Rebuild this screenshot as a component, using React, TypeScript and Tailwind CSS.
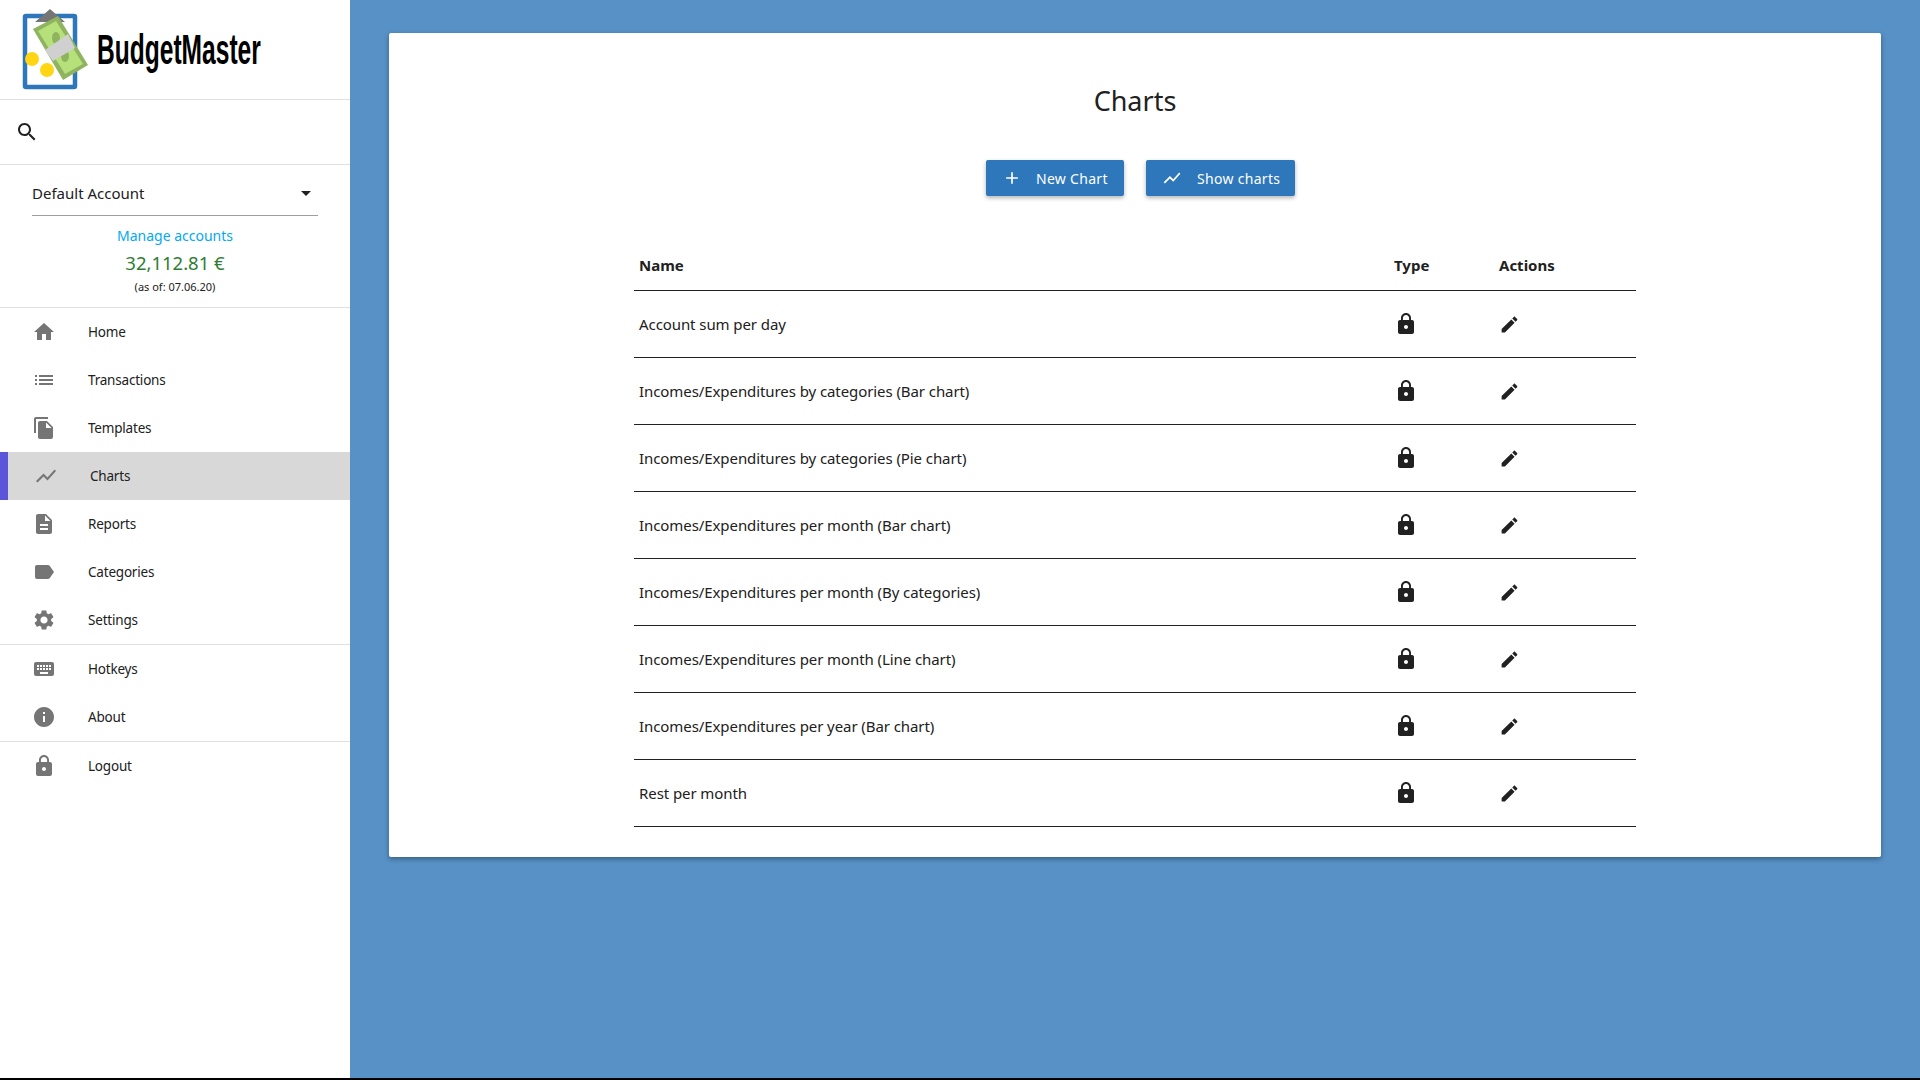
const paths = {
  home: "M10 20v-6h4v6h5v-8h3L12 3 2 12h3v8z",
  list: "M3 13h2v-2H3v2zm0 4h2v-2H3v2zm0-8h2V7H3v2zm4 4h14v-2H7v2zm0 4h14v-2H7v2zM7 7v2h14V7H7z",
  copy: "M16 1H4c-1.1 0-2 .9-2 2v14h2V3h12V1zm-1 4l6 6v10c0 1.1-.9 2-2 2H7.99C6.89 23 6 22.1 6 21l.01-14c0-1.1.89-2 1.99-2h7zm-1 7h5.5L14 6.5V12z",
  chart: "M3.5 18.49l6-6.01 4 4L22 6.92l-1.41-1.41-7.09 7.97-4-4L2 16.99z",
  report: "M14 2H6c-1.1 0-1.99.9-1.99 2L4 20c0 1.1.89 2 1.99 2H18c1.1 0 2-.9 2-2V8l-6-6zm2 16H8v-2h8v2zm0-4H8v-2h8v2zm-3-5V3.5L18.5 9H13z",
  label: "M17.63 5.84C17.27 5.33 16.67 5 16 5L5 5.01C3.9 5.01 3 5.9 3 7v10c0 1.1.9 1.99 2 1.99L16 19c.67 0 1.27-.33 1.63-.84L22 12l-4.37-6.16z",
  settings: "M19.14 12.94c.04-.3.06-.61.06-.94 0-.32-.02-.64-.07-.94l2.03-1.58c.18-.14.23-.41.12-.61l-1.92-3.32c-.12-.22-.37-.29-.59-.22l-2.39.96c-.5-.38-1.03-.7-1.62-.94l-.36-2.54c-.04-.24-.24-.41-.48-.41h-3.84c-.24 0-.43.17-.47.41l-.36 2.54c-.59.24-1.13.57-1.62.94l-2.39-.96c-.22-.08-.47 0-.59.22L2.74 8.87c-.12.21-.08.47.12.61l2.03 1.58c-.05.3-.09.63-.09.94s.02.64.07.94l-2.03 1.58c-.18.14-.23.41-.12.61l1.92 3.32c.12.22.37.29.59.22l2.39-.96c.5.38 1.03.7 1.62.94l.36 2.54c.05.24.24.41.48.41h3.84c.24 0 .44-.17.47-.41l.36-2.54c.59-.24 1.13-.56 1.62-.94l2.39.96c.22.08.47 0 .59-.22l1.92-3.32c.12-.22.07-.47-.12-.61l-2.01-1.58zM12 15.6c-1.98 0-3.6-1.62-3.6-3.6s1.62-3.6 3.6-3.6 3.6 1.62 3.6 3.6-1.62 3.6-3.6 3.6z",
  keyboard: "M20 5H4c-1.1 0-1.99.9-1.99 2L2 17c0 1.1.9 2 2 2h16c1.1 0 2-.9 2-2V7c0-1.1-.9-2-2-2zm-9 3h2v2h-2V8zm0 3h2v2h-2v-2zM8 8h2v2H8V8zm0 3h2v2H8v-2zm-1 2H5v-2h2v2zm0-3H5V8h2v2zm9 7H8v-2h8v2zm0-4h-2v-2h2v2zm0-3h-2V8h2v2zm3 3h-2v-2h2v2zm0-3h-2V8h2v2z",
  info: "M12 2C6.48 2 2 6.48 2 12s4.48 10 10 10 10-4.48 10-10S17.52 2 12 2zm1 15h-2v-6h2v6zm0-8h-2V7h2v2z",
  lock: "M18 8h-1V6c0-2.76-2.24-5-5-5S7 3.24 7 6v2H6c-1.1 0-2 .9-2 2v10c0 1.1.9 2 2 2h12c1.1 0 2-.9 2-2V10c0-1.1-.9-2-2-2zm-6 9c-1.1 0-2-.9-2-2s.9-2 2-2 2 .9 2 2-.9 2-2 2zm3.1-9H8.9V6c0-1.71 1.39-3.1 3.1-3.1 1.71 0 3.1 1.39 3.1 3.1v2z",
  edit: "M3 17.25V21h3.75L17.81 9.94l-3.75-3.75L3 17.25zM20.71 7.04c.39-.39.39-1.02 0-1.41l-2.34-2.34c-.39-.39-1.02-.39-1.41 0l-1.83 1.83 3.75 3.75 1.83-1.83z",
  search: "M15.5 14h-.79l-.28-.27C15.41 12.59 16 11.11 16 9.5 16 5.91 13.09 3 9.5 3S3 5.91 3 9.5 5.91 16 9.5 16c1.61 0 3.09-.59 4.23-1.57l.27.28v.79l5 4.99L20.49 19l-4.99-5zm-6 0C7.01 14 5 11.99 5 9.5S7.01 5 9.5 5 14 7.01 14 9.5 11.99 14 9.5 14z",
  add: "M19 13h-6v6h-2v-6H5v-2h6V5h2v6h6v2z",
};

function Icon({ name, className }: { name: keyof typeof paths; className: string }) {
  return (
    <svg viewBox="0 0 24 24" fill="currentColor" className={className}>
      <path d={paths[name]} />
    </svg>
  );
}

function Logo() {
  return (
    <svg viewBox="0 0 90 90" className="w-[90px] h-[90px] shrink-0">
      <rect x="25" y="16" width="50" height="71" rx="1" fill="#fff" stroke="#2e77bb" strokeWidth="4.5" />
      <path d="M35 22l7-6 8-7 8 7 7 6z" fill="#757575" />
      <circle cx="32" cy="59" r="7" fill="#ffd514" />
      <circle cx="47" cy="70" r="7" fill="#ffd514" />
      <path d="M33 29L58 16L88 65L63 80z" fill="#8fb35f" />
      <path d="M38 31L56 21L83 64L65 74z" fill="#b5e07a" />
      <ellipse cx="56" cy="38" rx="4" ry="6" fill="#8fb35f" />
      <ellipse cx="65" cy="56" rx="4" ry="6" fill="#8fb35f" />
      <path d="M45 50L68 34L75 48L53 61z" fill="#d0d0d0" />
    </svg>
  );
}

const mainNav: { name: keyof typeof paths; label: string; active?: boolean }[] = [
  { name: "home", label: "Home" },
  { name: "list", label: "Transactions" },
  { name: "copy", label: "Templates" },
  { name: "chart", label: "Charts", active: true },
  { name: "report", label: "Reports" },
  { name: "label", label: "Categories" },
  { name: "settings", label: "Settings" },
];

function NavItem({ name, label, active }: { name: keyof typeof paths; label: string; active?: boolean }) {
  return (
    <div className={active ? "flex items-center h-12 bg-[#d8d8d8] border-l-8 border-[#5c55d9] pl-[26px]" : "flex items-center h-12 pl-8"}>
      <Icon name={name} className="w-6 h-6 text-[#757575] shrink-0" />
      <span className="ml-8 text-[13.5px] tracking-[-0.2px] text-[#212121]">{label}</span>
    </div>
  );
}

const rows = [
  "Account sum per day",
  "Incomes/Expenditures by categories (Bar chart)",
  "Incomes/Expenditures by categories (Pie chart)",
  "Incomes/Expenditures per month (Bar chart)",
  "Incomes/Expenditures per month (By categories)",
  "Incomes/Expenditures per month (Line chart)",
  "Incomes/Expenditures per year (Bar chart)",
  "Rest per month",
];

export default function App() {
  return (
    <div className="h-[1080px] bg-black overflow-hidden font-['Noto_Sans',sans-serif] text-[#212121]">
      <div className="flex h-[1078px] bg-[#5791c6]">
        <aside className="w-[350px] shrink-0 bg-white">
          <div className="flex items-start h-[100px] border-b border-[#e0e0e0] overflow-hidden">
            <Logo />
            <div className="ml-[7px] mt-[29px] w-[164px] origin-left scale-x-[0.585] text-[42px] font-bold leading-none text-black font-['Liberation_Sans',sans-serif] whitespace-nowrap">
              BudgetMaster
            </div>
          </div>
          <div className="flex items-center h-[65px] pl-[15px] border-b border-[#e0e0e0]">
            <Icon name="search" className="w-6 h-6 text-[#212121]" />
          </div>
          <div className="h-[143px] border-b border-[#e0e0e0] px-8">
            <div className="flex items-center justify-between h-[51px] pt-[6px] border-b border-[#9e9e9e]">
              <span className="text-[15px]">Default Account</span>
              <span className="mr-[7px] w-0 h-0 border-x-[5px] border-x-transparent border-t-[5px] border-t-[#212121]" />
            </div>
            <div className="flex flex-col items-center">
              <span className="mt-[9px] h-[21px] leading-[21px] text-[14px] text-[#03a9f4]">Manage accounts</span>
              <span className="mt-[4px] h-[26px] leading-[26px] text-[18.5px] text-[#2e7d32]">32,112.81 €</span>
              <span className="mt-[3px] text-[11px] leading-[16px]">(as of: 07.06.20)</span>
            </div>
          </div>
          <div>
            {mainNav.map((item) => (
              <NavItem key={item.label} {...item} />
            ))}
          </div>
          <div className="border-t border-[#e0e0e0]">
            <NavItem name="keyboard" label="Hotkeys" />
            <NavItem name="info" label="About" />
          </div>
          <div className="border-t border-[#e0e0e0]">
            <NavItem name="lock" label="Logout" />
          </div>
        </aside>
        <main className="flex-1 pt-[33px] pl-[39px] pr-[39px]">
          <div className="h-[824px] bg-white rounded-[2px] shadow-[0_2px_5px_rgba(0,0,0,0.35)] pt-[47px]">
            <h1 className="text-center text-[27px] leading-[42px] font-normal">Charts</h1>
            <div className="flex justify-center gap-[22px] mt-[38px] ml-[11px]">
              <button className="flex items-center h-9 w-[138px] pl-4 bg-[#2e77bb] text-white rounded-[2px] shadow-[0_2px_4px_rgba(0,0,0,0.3)]">
                <Icon name="add" className="w-5 h-5" />
                <span className="ml-[14px] text-[14px] tracking-[0.3px]">New Chart</span>
              </button>
              <button className="flex items-center h-9 w-[149px] pl-4 bg-[#2e77bb] text-white rounded-[2px] shadow-[0_2px_4px_rgba(0,0,0,0.3)]">
                <Icon name="chart" className="w-5 h-5" />
                <span className="ml-[15px] text-[14px] tracking-[0.3px]">Show charts</span>
              </button>
            </div>
            <div className="w-[1002px] mt-[24px] ml-[245px]">
              <div className="grid grid-cols-[755px_105px_1fr] items-end h-[71px] pb-[14px] border-b-[1.5px] border-[#212121] font-bold text-[15px] pl-[5px]">
                <span>Name</span>
                <span>Type</span>
                <span>Actions</span>
              </div>
              {rows.map((row) => (
                <div key={row} className="grid grid-cols-[755px_105px_1fr] items-center h-[67px] border-b-[1.5px] border-[#212121] pl-[5px] text-[15px] tracking-[-0.08px]">
                  <span>{row}</span>
                  <Icon name="lock" className="w-6 h-6" />
                  <Icon name="edit" className="w-[21px] h-[21px]" />
                </div>
              ))}
            </div>
          </div>
        </main>
      </div>
    </div>
  );
}
